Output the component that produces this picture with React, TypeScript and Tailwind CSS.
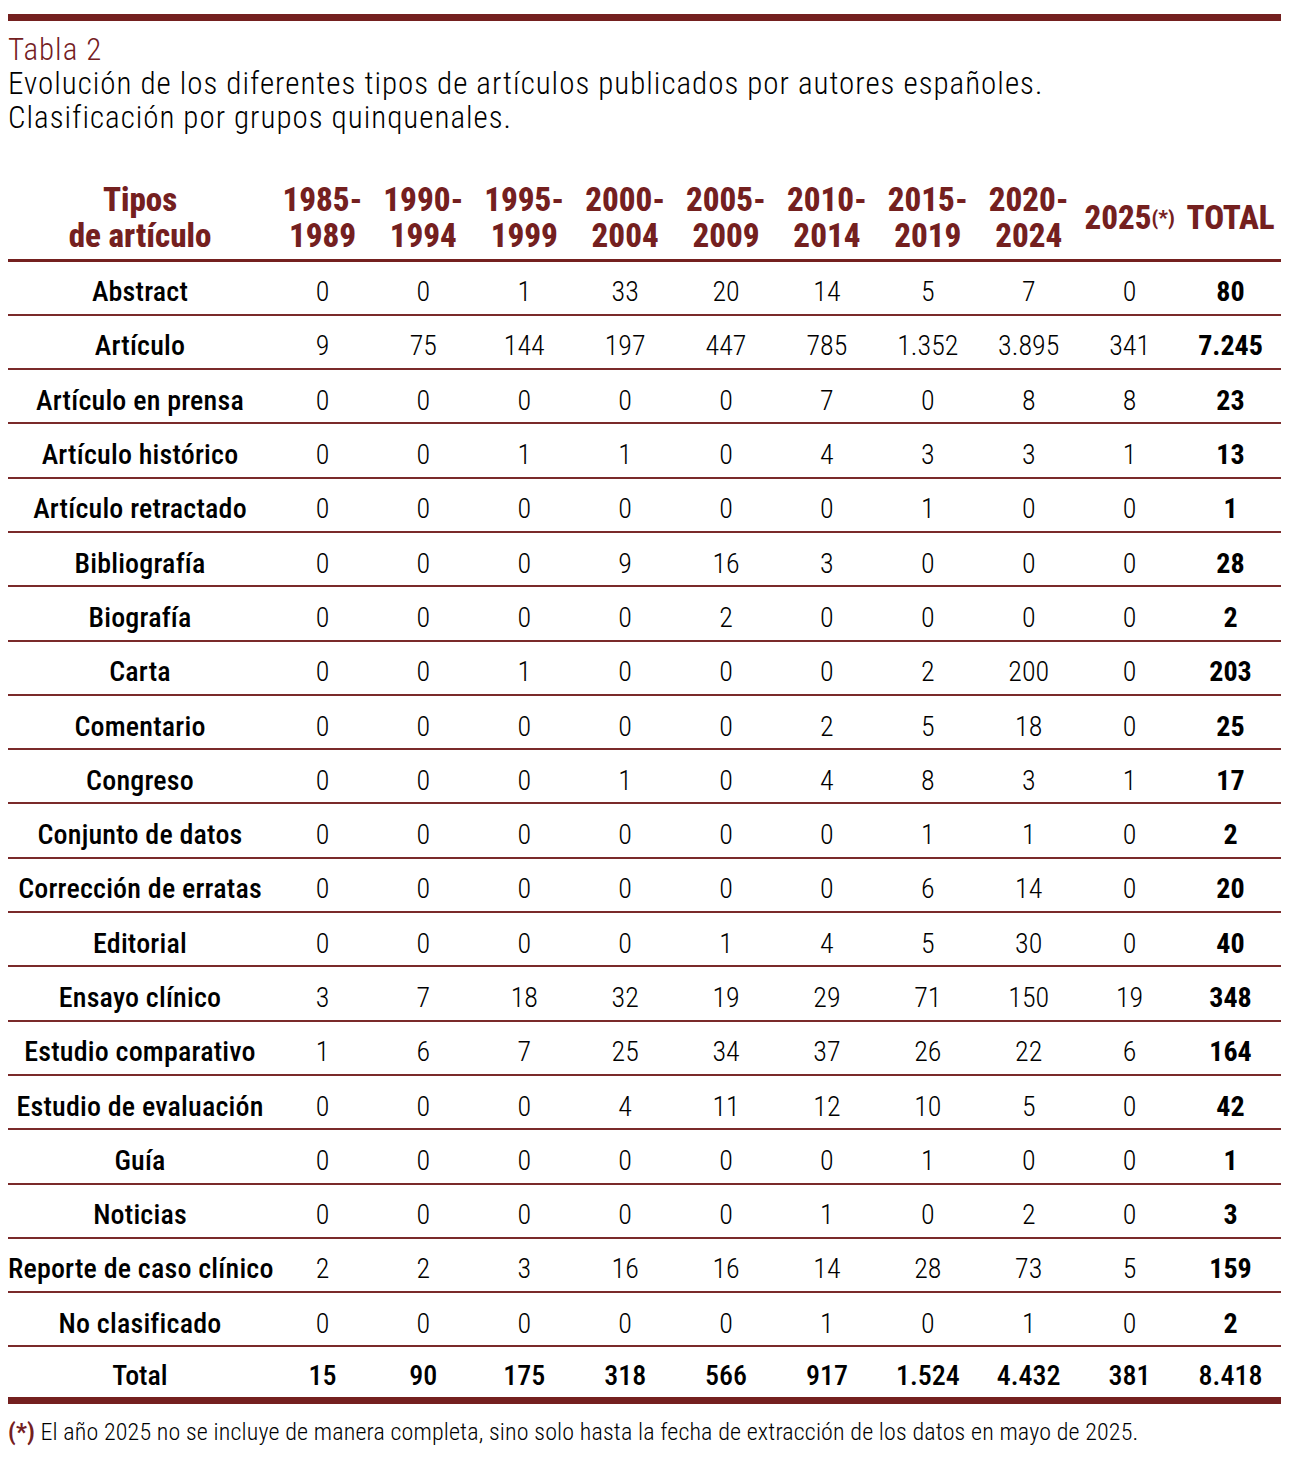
const periods = [
  ['1985-', '1989'],
  ['1990-', '1994'],
  ['1995-', '1999'],
  ['2000-', '2004'],
  ['2005-', '2009'],
  ['2010-', '2014'],
  ['2015-', '2019'],
  ['2020-', '2024'],
];

// tipo, 8 quinquenios, 2025, total
const rows: [string, string[]][] = [
  ['Abstract', ['0', '0', '1', '33', '20', '14', '5', '7', '0', '80']],
  ['Artículo', ['9', '75', '144', '197', '447', '785', '1.352', '3.895', '341', '7.245']],
  ['Artículo en prensa', ['0', '0', '0', '0', '0', '7', '0', '8', '8', '23']],
  ['Artículo histórico', ['0', '0', '1', '1', '0', '4', '3', '3', '1', '13']],
  ['Artículo retractado', ['0', '0', '0', '0', '0', '0', '1', '0', '0', '1']],
  ['Bibliografía', ['0', '0', '0', '9', '16', '3', '0', '0', '0', '28']],
  ['Biografía', ['0', '0', '0', '0', '2', '0', '0', '0', '0', '2']],
  ['Carta', ['0', '0', '1', '0', '0', '0', '2', '200', '0', '203']],
  ['Comentario', ['0', '0', '0', '0', '0', '2', '5', '18', '0', '25']],
  ['Congreso', ['0', '0', '0', '1', '0', '4', '8', '3', '1', '17']],
  ['Conjunto de datos', ['0', '0', '0', '0', '0', '0', '1', '1', '0', '2']],
  ['Corrección de erratas', ['0', '0', '0', '0', '0', '0', '6', '14', '0', '20']],
  ['Editorial', ['0', '0', '0', '0', '1', '4', '5', '30', '0', '40']],
  ['Ensayo clínico', ['3', '7', '18', '32', '19', '29', '71', '150', '19', '348']],
  ['Estudio comparativo', ['1', '6', '7', '25', '34', '37', '26', '22', '6', '164']],
  ['Estudio de evaluación', ['0', '0', '0', '4', '11', '12', '10', '5', '0', '42']],
  ['Guía', ['0', '0', '0', '0', '0', '0', '1', '0', '0', '1']],
  ['Noticias', ['0', '0', '0', '0', '0', '1', '0', '2', '0', '3']],
  ['Reporte de caso clínico', ['2', '2', '3', '16', '16', '14', '28', '73', '5', '159']],
  ['No clasificado', ['0', '0', '0', '0', '0', '1', '0', '1', '0', '2']],
];

const totals = ['15', '90', '175', '318', '566', '917', '1.524', '4.432', '381', '8.418'];

export default function App() {
  return (
    <div className="w-[1296px] h-[1462px] bg-white text-black px-2 pt-[14px] font-['Roboto_Condensed','Liberation_Sans',sans-serif]">
      <div className="w-[1273px]">
        <div className="h-[7px] bg-[#74201f]" />

        <div className="pt-[12px] text-[31px] leading-[34px] font-light tracking-[1px]">
          <div className="text-[#74201f]">Tabla 2</div>
          <div>Evolución de los diferentes tipos de artículos publicados por autores españoles.</div>
          <div>Clasificación por grupos quinquenales.</div>
        </div>

        <table className="mt-[44px] w-[1273px] table-fixed border-collapse">
          <colgroup>
            <col className="w-[264px]" />
            {Array.from({ length: 10 }).map((_, i) => (
              <col key={i} className="w-[100.9px]" />
            ))}
          </colgroup>
          <thead>
            <tr className="border-b-[3px] border-[#74201f] text-[#74201f] text-[33px] leading-[36px]">
              <th className="pt-[3px] pb-[5px] align-middle text-center font-extrabold">
                Tipos
                <br />
                de artículo
              </th>
              {periods.map(([a, b]) => (
                <th key={a} className="pt-[3px] pb-[5px] align-middle text-center font-extrabold">
                  {a}
                  <br />
                  {b}
                </th>
              ))}
              <th className="pt-[3px] pb-[5px] align-middle text-center font-extrabold whitespace-nowrap">
                2025<sup className="text-[21px] relative -top-[4px]">(*)</sup>
              </th>
              <th className="pt-[3px] pb-[5px] align-middle text-center font-extrabold">TOTAL</th>
            </tr>
          </thead>
          <tbody className="text-[28px]">
            {rows.map(([label, values]) => (
              <tr key={label} className="h-[54.3px] border-b-2 border-[#7a2a2a]">
                <td className="pt-[9px] text-center font-medium whitespace-nowrap leading-none tracking-[0.2px]">
                  {label}
                </td>
                {values.map((v, i) => (
                  <td
                    key={i}
                    className={`pt-[9px] text-center leading-none ${i === 9 ? 'font-bold' : 'font-light'}`}
                  >
                    {v}
                  </td>
                ))}
              </tr>
            ))}
            <tr className="h-[51px] font-medium">
              <td className="pt-[8px] text-center leading-none">Total</td>
              {totals.map((v, i) => (
                <td key={i} className="pt-[8px] text-center leading-none">
                  {v}
                </td>
              ))}
            </tr>
          </tbody>
        </table>

        <div className="h-[7px] bg-[#74201f]" />

        <div className="pt-[14px] text-[24px] leading-[28px] font-light tracking-[0.15px]">
          <span className="font-bold text-[#74201f]">(*)</span> El año 2025 no se incluye de manera completa, sino solo
          hasta la fecha de extracción de los datos en mayo de 2025.
        </div>
      </div>
    </div>
  );
}
